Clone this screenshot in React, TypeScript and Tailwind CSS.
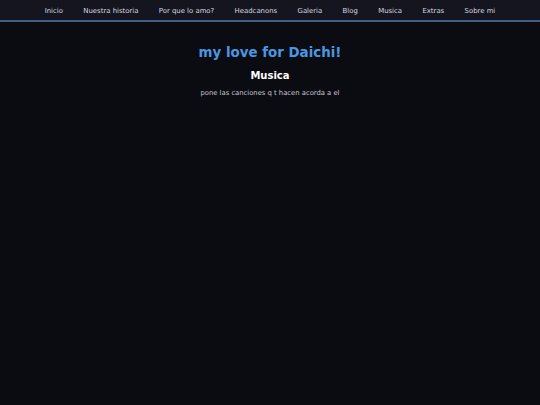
import React from 'react';

const links = ['Inicio', 'Nuestra historia', 'Por que lo amo?', 'Headcanons', 'Galeria', 'Blog', 'Musica', 'Extras', 'Sobre mi'];

export default function App() {
  return (
    <div className="min-h-[405px] bg-[#0b0b12] font-['DejaVu_Sans',sans-serif] text-white">
      <nav className="flex h-[22px] items-center justify-center border-b-2 border-[#3d5f86] bg-[#15151f] pt-[2px]">
        {links.map((l) => (
          <a key={l} className="px-[10.2px] text-[6.9px] text-[#d8d8e0]">
            {l}
          </a>
        ))}
      </nav>
      <div className="flex flex-col items-center pt-[22px]">
        <h1 className="text-[13.4px] font-bold leading-[18px] text-[#4a98e0]">my love for Daichi!</h1>
        <h2 className="mt-[7px] text-[10px] font-bold leading-[14px]">Musica</h2>
        <p className="mt-[5px] text-[6.8px] text-[#c8c8d0]">pone las canciones q t hacen acorda a el</p>
      </div>
    </div>
  );
}
